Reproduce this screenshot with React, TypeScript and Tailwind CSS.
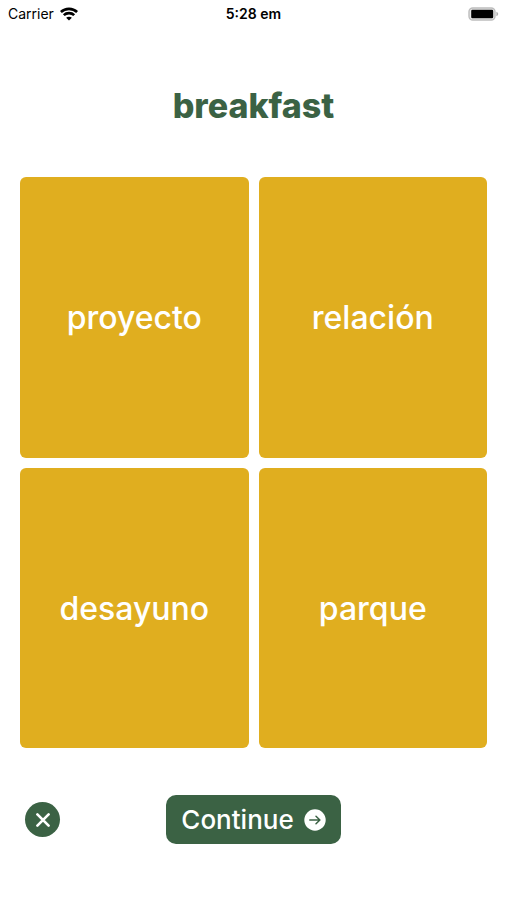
import { useState } from 'react'
import { cx } from 'class-variance-authority'

const PROMPT = 'breakfast'
const CHOICES = ['proyecto', 'relación', 'desayuno', 'parque']

function WifiIcon() {
  return (
    <svg viewBox="0 0 18 14" className="h-3.5 w-[18px]" fill="none" stroke="currentColor" strokeWidth="2.6" aria-hidden="true">
      <path d="M.9 5C5.3.8 12.7.8 17.1 5" />
      <path d="M3.8 8.2c2.8-2.8 7.6-2.8 10.4 0" />
      <path d="M9 13.6 6.1 10.8c1.6-1.5 4.2-1.5 5.8 0z" fill="currentColor" stroke="none" />
    </svg>
  )
}

function BatteryIcon() {
  return (
    <svg viewBox="0 0 31 14" className="h-3.5 w-[31px]" aria-hidden="true">
      <rect x="1" y="1" width="26" height="12" rx="3.8" fill="#e8e8e8" stroke="#bdbdbd" strokeWidth="1.4" />
      <rect x="3.2" y="2.8" width="22" height="8.4" rx="1.2" fill="#000" />
      <path d="M28.4 4.8c2.4.8 2.4 3.6 0 4.4z" fill="#b0b0b0" />
    </svg>
  )
}

function StatusBar() {
  return (
    <header className="grid h-7 grid-cols-[1fr_auto_1fr] items-center px-2 text-sm text-black">
      <div className="flex items-center gap-1.5">
        <span>Carrier</span>
        <WifiIcon />
      </div>
      <span className="font-semibold">5:28 em</span>
      <div className="flex justify-end">
        <BatteryIcon />
      </div>
    </header>
  )
}

interface ChoiceCardProps {
  word: string
  selected: boolean
  onSelect: () => void
}

function ChoiceCard({ word, selected, onSelect }: ChoiceCardProps) {
  return (
    <button
      type="button"
      aria-pressed={selected}
      onClick={onSelect}
      className={cx(
        'rounded-md bg-[#e0ae1f] pt-0.5 text-[32px] font-medium text-white',
        selected && 'ring-4 ring-[#3b6244]',
      )}
    >
      {word}
    </button>
  )
}

export default function App() {
  const [selected, setSelected] = useState<string | null>(null)

  return (
    <div className="flex min-h-screen flex-col bg-white font-['Inter','Liberation_Sans',sans-serif]">
      <StatusBar />

      <main className="flex flex-1 flex-col px-5 pt-[54px]">
        <h1 className="text-center text-[34px] leading-12 font-extrabold text-[#3b6244]">{PROMPT}</h1>
        <div className="mt-[47px] grid flex-1 grid-cols-2 grid-rows-2 gap-2.5">
          {CHOICES.map((word) => (
            <ChoiceCard
              key={word}
              word={word}
              selected={selected === word}
              onSelect={() => setSelected(word)}
            />
          ))}
        </div>
      </main>

      <footer className="grid grid-cols-[1fr_auto_1fr] items-center px-[25px] pt-[47px] pb-14">
        <button
          type="button"
          aria-label="Close"
          className="flex size-[35px] items-center justify-center rounded-full bg-[#3b6244] text-white"
        >
          <svg viewBox="0 0 14 14" className="size-3.5" fill="none" stroke="currentColor" strokeWidth="2.6" strokeLinecap="round" aria-hidden="true">
            <path d="M1.4 1.4l11.2 11.2M12.6 1.4 1.4 12.6" />
          </svg>
        </button>
        <button
          type="button"
          className="flex h-[49px] items-center gap-2.5 rounded-[10px] bg-[#3b6244] px-[15px] text-[26px] font-medium text-white"
        >
          Continue
          <svg viewBox="0 0 22 22" className="size-[22px]" fill="none" aria-hidden="true">
            <circle cx="11" cy="11" r="10.7" fill="#fff" />
            <path d="M5.8 11h10M12 7.2l3.9 3.8-3.9 3.8" stroke="#3b6244" strokeWidth="1.5" strokeLinecap="round" strokeLinejoin="round" />
          </svg>
        </button>
      </footer>
    </div>
  )
}
